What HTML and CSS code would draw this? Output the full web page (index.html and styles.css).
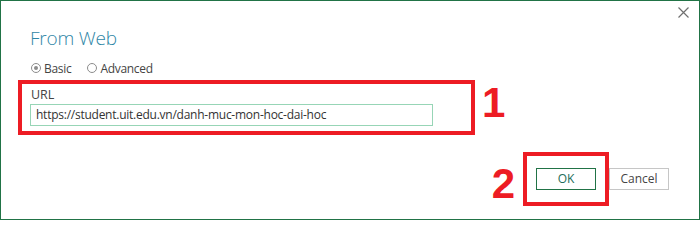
FILE: index.html
```html
<!DOCTYPE html>
<html>
<head>
<meta charset="utf-8">
<link rel="stylesheet" href="styles.css">
</head>
<body>
<div class="dialog">
  <div class="titlebar">
    <svg class="close" width="11" height="11" viewBox="0 0 11 11"><path d="M0.5 0.5 L10.5 10.5 M10.5 0.5 L0.5 10.5" stroke="#707070" stroke-width="1.2" fill="none"/></svg>
  </div>
  <div class="content">
    <h1 class="title">From Web</h1>
    <div class="modes">
      <span class="radio checked"></span><span class="mode-label">Basic</span>
      <span class="radio"></span><span class="mode-label">Advanced</span>
    </div>
    <div class="url-row">
      <div class="mark mark-url">
        <div class="field-label">URL</div>
        <div class="input">https://student.uit.edu.vn/danh-muc-mon-hoc-dai-hoc</div>
      </div>
      <span class="step step-1">1</span>
    </div>
    <div class="actions">
      <span class="step step-2">2</span>
      <div class="mark mark-ok"><div class="btn btn-ok">OK</div></div>
      <div class="btn btn-cancel">Cancel</div>
    </div>
  </div>
</div>
</body>
</html>
```
FILE: styles.css
```css
html, body { margin: 0; padding: 0; background: #fff; }
body { font-family: "Open Sans", "Noto Sans", sans-serif; color: #333; }
.dialog {
  width: 700px; height: 220px; box-sizing: border-box;
  border: 1px solid #217346; background: #fff;
  display: flex; flex-direction: column;
}
.titlebar { height: 24px; display: flex; justify-content: flex-end; align-items: flex-start; padding-right: 10px; }
.close { margin-top: 6px; display: block; }
.content { padding-left: 29px; padding-right: 30px; display: flex; flex-direction: column; }
.title {
  margin: 0 0 0 0; font-size: 19px; line-height: 26px; font-weight: 300;
  color: #2f86a6; letter-spacing: -0.2px;
}
.modes { margin-top: 10px; display: flex; align-items: center; height: 16px; font-size: 12px; line-height: 16px; color: #444; letter-spacing: -0.3px; }
.radio {
  width: 10px; height: 10px; box-sizing: border-box; border-radius: 50%;
  border: 1px solid #8c8c8c; margin-left: 1px; margin-right: 3px; position: relative; top: -1px;
}
.radio.checked::after {
  content: ""; position: absolute; left: 2px; top: 2px; width: 4px; height: 4px;
  border-radius: 50%; background: #8c8c8c;
}
.mode-label { margin-right: 15px; }
.url-row { margin-top: 3px; margin-left: -12px; display: flex; align-items: flex-start; }
.mark { border: 4px solid #ed1c24; box-sizing: border-box; }
.mark-url { width: 457px; height: 55px; padding: 3px 0 0 8px; }
.field-label { font-size: 12.5px; line-height: 16px; color: #444; padding-left: 1px; margin-bottom: 1px; }
.input {
  width: 403px; height: 22px; box-sizing: border-box; border: 1px solid #97d5b6;
  font-size: 12px; line-height: 20px; padding-left: 5px; color: #333; white-space: nowrap; letter-spacing: -0.25px;
}
.step { color: #ed1c24; font-family: "Liberation Sans", Arial, sans-serif; font-weight: bold; font-size: 42px; line-height: 42px; }
.step-1 { margin-left: 7px; margin-top: 2px; }
.actions { margin-top: 17px; display: flex; justify-content: flex-end; align-items: flex-start; }
.step-2 { margin-right: 8px; margin-top: 11px; }
.mark-ok { width: 86px; height: 54px; padding: 12px 9px; }
.btn {
  width: 60px; height: 22px; box-sizing: border-box; display: flex; align-items: center; justify-content: center;
  font-size: 12px; line-height: 16px;
}
.btn-ok { border: 1px solid #217346; color: #1e6e5a; }
.btn-cancel { border: 1px solid #c6c6c6; color: #444; margin-top: 16px; }
```
